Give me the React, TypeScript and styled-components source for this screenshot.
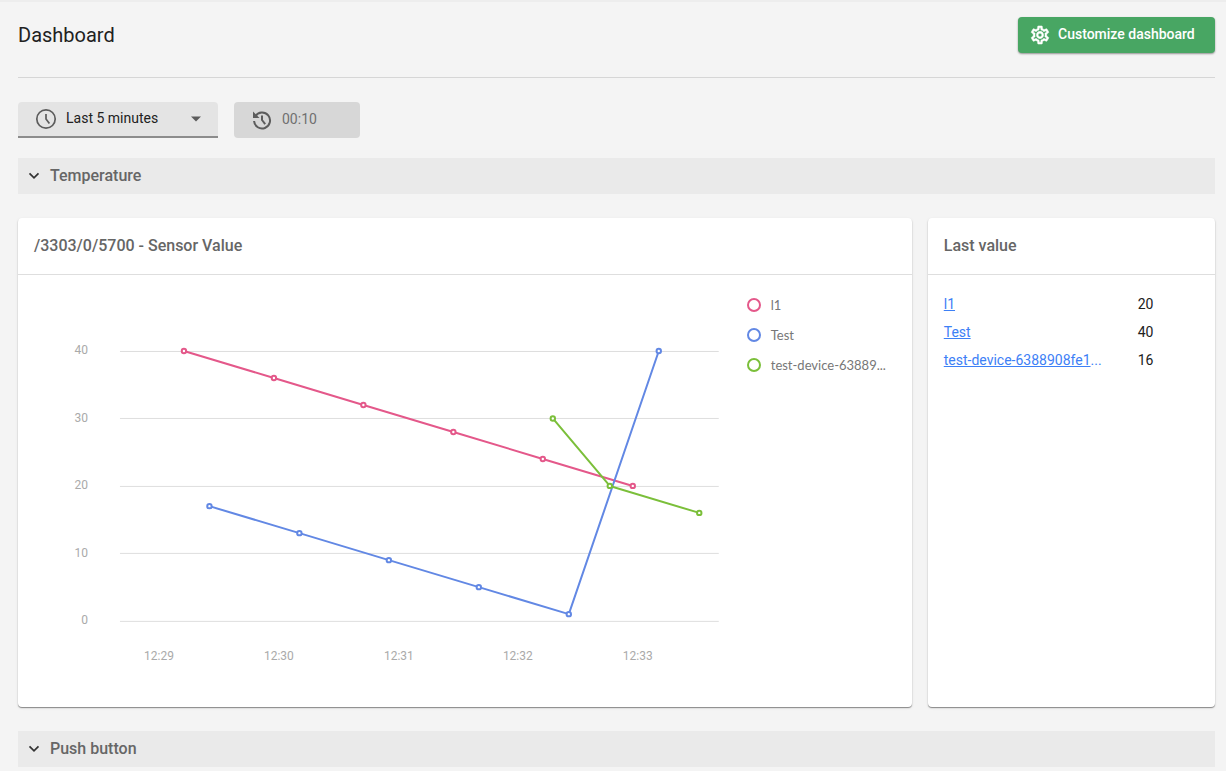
import React, { useState } from "react";
import styled, { createGlobalStyle } from "styled-components";

const GlobalStyle = createGlobalStyle`
  *, *::before, *::after { box-sizing: border-box; }
  body {
    margin: 0;
    background: #f4f4f4;
    color: #212121;
    font-family: Roboto, "Liberation Sans", sans-serif;
    font-size: 14px;
    line-height: 20px;
  }
`;

const Page = styled.main`
  border-top: 2px solid #ededed;
  padding: 15px 11px 4px 18px;
`;

const Header = styled.header`
  display: flex;
  align-items: center;
  justify-content: space-between;
  padding-bottom: 24px;
  border-bottom: 1px solid #d6d6d6;
`;

const Title = styled.h1`
  margin: 0;
  font-size: 20px;
  line-height: 36px;
  font-weight: 400;
`;

const PrimaryButton = styled.button`
  display: flex;
  align-items: center;
  gap: 8px;
  min-width: 197px;
  height: 36px;
  padding: 0 16px 2px 12px;
  border: 0;
  border-radius: 4px;
  background: #48a663;
  color: #fff;
  font: 500 14px/20px Roboto, sans-serif;
  box-shadow: 0 1px 2px rgba(0, 0, 0, 0.4);
  cursor: pointer;

  svg {
    margin-top: 2px;
  }
`;

const Filters = styled.div`
  display: flex;
  gap: 16px;
  margin: 24px 0 20px;
`;

const Field = styled.label<{ $width: number; $muted?: boolean }>`
  display: flex;
  align-items: center;
  width: ${(p) => p.$width}px;
  height: 36px;
  padding: 0 16px;
  gap: 8px;
  color: #5c5c5c;
  background: ${(p) => (p.$muted ? "#d7d7d7" : "#e4e4e4")};
  border-bottom: ${(p) => (p.$muted ? "0" : "2px solid #8c8c8c")};
  border-radius: ${(p) => (p.$muted ? "4px" : "4px 4px 0 0")};
`;

const Select = styled.select`
  flex: 1;
  min-width: 0;
  padding: 0 0 2px;
  border: 0;
  outline: 0;
  appearance: none;
  background: transparent;
  color: #212121;
  font: 400 14px/20px Roboto, sans-serif;
`;

const TimeInput = styled.input`
  flex: 1;
  min-width: 0;
  padding: 0 0 2px;
  border: 0;
  outline: 0;
  background: transparent;
  color: #707070;
  font: 400 14px/20px Roboto, sans-serif;
`;

const SectionToggle = styled.button`
  display: flex;
  align-items: center;
  gap: 8px;
  width: 100%;
  height: 36px;
  padding: 0 8px;
  border: 0;
  background: #eaeaea;
  color: #666;
  font: 500 16px/24px Roboto, sans-serif;
  text-align: left;
  cursor: pointer;
`;

const Widgets = styled.div`
  display: grid;
  grid-template-columns: repeat(12, minmax(0, 1fr));
  gap: 16px;
  margin: 24px 0;
`;

const Card = styled.section<{ $span: number }>`
  grid-column: span ${(p) => p.$span};
  display: flex;
  flex-direction: column;
  min-width: 0;
  border-radius: 4px;
  background: #fff;
  box-shadow: 0 1px 1px rgba(0, 0, 0, 0.4), 0 1px 3px rgba(0, 0, 0, 0.1);
`;

const CardTitle = styled.h2`
  margin: 0;
  padding: 16px 16px;
  border-bottom: 1px solid #dedede;
  color: #666;
  font-size: 16px;
  line-height: 24px;
  font-weight: 500;
`;

const ChartBody = styled.div`
  display: flex;
  align-items: flex-start;
`;

const ChartSvg = styled.svg`
  display: block;
  flex: 1;
  min-width: 0;
  height: auto;
`;

const TickLabel = styled.text`
  fill: #aaa;
  font: 400 12px Roboto, sans-serif;
`;

const Legend = styled.ul`
  flex: 0 0 165px;
  margin: 0;
  padding: 15px 16px 0 0;
  list-style: none;
`;

const LegendItem = styled.li`
  display: flex;
  align-items: center;
  gap: 10px;
  height: 30px;
  color: #777;
  font-family: Lato, sans-serif;
  font-size: 13px;
  white-space: nowrap;
`;

const LegendMark = styled.span<{ $color: string }>`
  flex: none;
  width: 14px;
  height: 14px;
  border: 2px solid ${(p) => p.$color};
  border-radius: 50%;
`;

const ValueTable = styled.table`
  margin: 15px 16px;
  border-collapse: collapse;
  table-layout: fixed;

  th,
  td {
    height: 28px;
    padding: 0;
    font-weight: 400;
    text-align: left;
    white-space: nowrap;
  }

  th {
    width: 76%;
    color: #3d80f6;
  }
`;

const DeviceLink = styled.a`
  color: #3d80f6;
  text-decoration: underline;
`;

const ClockIcon = () => (
  <svg width="24" height="24" viewBox="0 0 24 24" fill="none" stroke="currentColor" aria-hidden="true">
    <circle cx="12" cy="12" r="9.2" strokeWidth="1.7" />
    <path d="M12 7V12l3.400 4.500" strokeWidth="1.7" />
  </svg>
);

const HistoryIcon = () => (
  <svg width="24" height="24" viewBox="0 0 24 24" fill="none" stroke="currentColor" strokeWidth="2" aria-hidden="true">
    <path d="M5.300 8.200A8 8 0 1 1 4.050 13" />
    <path d="M3 3.500V10H9.500z" fill="currentColor" stroke="none" />
    <path d="M12 7.500V12l3.200 4.200" />
  </svg>
);

const GearIcon = () => (
  <svg width="20" height="20" viewBox="1 1 22 22" fill="currentColor" stroke="currentColor" strokeWidth="0.5" aria-hidden="true">
    <path d="M19.43 12.98c.04-.32.07-.64.07-.98 0-.34-.03-.66-.07-.98l2.11-1.65c.19-.15.24-.42.12-.64l-2-3.46c-.09-.16-.26-.25-.44-.25-.06 0-.12.01-.17.03l-2.49 1c-.52-.4-1.08-.73-1.69-.98l-.38-2.65C14.46 2.18 14.25 2 14 2h-4c-.25 0-.46.18-.49.42l-.38 2.65c-.61.25-1.17.59-1.69.98l-2.49-1c-.06-.02-.12-.03-.18-.03-.17 0-.34.09-.43.25l-2 3.46c-.13.22-.07.49.12.64l2.11 1.65c-.04.32-.07.65-.07.98 0 .33.03.66.07.98l-2.11 1.65c-.19.15-.24.42-.12.64l2 3.46c.09.16.26.25.44.25.06 0 .12-.01.17-.03l2.49-1c.52.4 1.08.73 1.69.98l.38 2.65c.03.24.24.42.49.42h4c.25 0 .46-.18.49-.42l.38-2.65c.61-.25 1.17-.59 1.69-.98l2.49 1c.06.02.12.03.18.03.17 0 .34-.09.43-.25l2-3.46c.12-.22.07-.49-.12-.64l-2.11-1.65zm-1.98-1.71c.04.31.05.52.05.73 0 .21-.02.43-.05.73l-.14 1.13.89.7 1.08.84-.7 1.21-1.27-.51-1.04-.42-.9.68c-.43.32-.84.56-1.25.73l-1.06.43-.16 1.13-.2 1.35h-1.4l-.19-1.35-.16-1.13-1.06-.43c-.43-.18-.83-.41-1.23-.71l-.91-.7-1.06.43-1.27.51-.7-1.21 1.08-.84.89-.7-.14-1.13c-.03-.31-.05-.54-.05-.74s.02-.43.05-.73l.14-1.13-.89-.7-1.08-.84.7-1.21 1.27.51 1.04.42.9-.68c.43-.32.84-.56 1.25-.73l1.06-.43.16-1.13.2-1.35h1.39l.19 1.35.16 1.13 1.06.43c.43.18.83.41 1.23.71l.91.7 1.06-.43 1.27-.51.7 1.21-1.07.85-.89.7.14 1.13zM12 8c-2.21 0-4 1.79-4 4s1.790 4 4 4 4-1.790 4-4-1.790-4-4-4zm0 6c-1.100 0-2-.9-2-2s.9-2 2-2 2 .9 2 2-.9 2-2 2z" />
  </svg>
);

const CaretIcon = () => (
  <svg width="12" height="6" viewBox="0 0 12 6" fill="currentColor" aria-hidden="true">
    <path d="M1 .5h10L6 5.500z" />
  </svg>
);

const ChevronIcon = () => (
  <svg width="16" height="16" viewBox="0 0 16 16" fill="none" stroke="#333" strokeWidth="1.700" aria-hidden="true">
    <path d="M3.500 5.300L8 9.800l4.500-4.500" />
  </svg>
);

type Series = { name: string; color: string; points: [number, number][] };

const series: Series[] = [
  { name: "l1", color: "#e4588a", points: [[166, 40], [256, 36], [345.5, 32], [435.5, 28], [525, 24], [615, 20]] },
  { name: "Test", color: "#6288e4", points: [[191.5, 17], [281.5, 13], [371, 9], [461, 5], [551, 1], [641, 40]] },
  { name: "test-device-63889...", color: "#7bbf3a", points: [[535, 30], [592, 20], [681.5, 16]] },
];

const xTicks: [number, string][] = [
  [141, "12:29"],
  [261, "12:30"],
  [381, "12:31"],
  [500, "12:32"],
  [620, "12:33"],
];

const lastValues = [
  { name: "l1", value: 20 },
  { name: "Test", value: 40 },
  { name: "test-device-6388908fe1", value: 16, truncated: true },
];

const yOf = (value: number) => 346 - value * 6.75;

const LineChart = () => (
  <ChartSvg viewBox="0 0 729 432" role="img" aria-label="Sensor value over time">
    {[0, 10, 20, 30, 40].map((v) => (
      <g key={v}>
        <rect x="102" y={Math.floor(yOf(v) + 0.3)} width="599" height="1" fill="#dedede" />
        <TickLabel x="70" y={Math.round(yOf(v)) + 3} textAnchor="end">{v}</TickLabel>
      </g>
    ))}
    {xTicks.map(([x, label]) => (
      <TickLabel key={label} x={x} y="385" textAnchor="middle">{label}</TickLabel>
    ))}
    {series.map((s) => (
      <g key={s.name} stroke={s.color} strokeWidth="2">
        <polyline fill="none" strokeLinejoin="bevel" points={s.points.map(([x, v]) => `${x},${yOf(v)}`).join(" ")} />
        {s.points.map(([x, v]) => (
          <circle key={x} cx={x} cy={yOf(v)} r="2.200" fill="#fff" strokeWidth="2" />
        ))}
      </g>
    ))}
  </ChartSvg>
);

export default function App() {
  const [open, setOpen] = useState(true);
  return (
    <>
      <GlobalStyle />
      <Page>
        <Header>
          <Title>Dashboard</Title>
          <PrimaryButton type="button">
            <GearIcon />
            Customize dashboard
          </PrimaryButton>
        </Header>

        <Filters>
          <Field $width={200}>
            <ClockIcon />
            <Select aria-label="Time range" defaultValue="5m">
              <option value="5m">Last 5 minutes</option>
            </Select>
            <CaretIcon />
          </Field>
          <Field $width={126} $muted>
            <HistoryIcon />
            <TimeInput aria-label="Time until refresh" value="00:10" readOnly />
          </Field>
        </Filters>

        <SectionToggle type="button" aria-expanded={open} onClick={() => setOpen(!open)}>
          <ChevronIcon />
          Temperature
        </SectionToggle>

        {open && (
          <Widgets>
            <Card $span={9}>
              <CardTitle>/3303/0/5700 - Sensor Value</CardTitle>
              <ChartBody>
                <LineChart />
                <Legend>
                  {series.map((s) => (
                    <LegendItem key={s.name}>
                      <LegendMark $color={s.color} />
                      {s.name}
                    </LegendItem>
                  ))}
                </Legend>
              </ChartBody>
            </Card>

            <Card $span={3}>
              <CardTitle>Last value</CardTitle>
              <ValueTable>
                <tbody>
                  {lastValues.map((row) => (
                    <tr key={row.name}>
                      <th scope="row">
                        <DeviceLink href="#">{row.name}</DeviceLink>
                        {row.truncated && "..."}
                      </th>
                      <td>{row.value}</td>
                    </tr>
                  ))}
                </tbody>
              </ValueTable>
            </Card>
          </Widgets>
        )}

        <SectionToggle type="button" aria-expanded={false}>
          <ChevronIcon />
          Push button
        </SectionToggle>
      </Page>
    </>
  );
}
